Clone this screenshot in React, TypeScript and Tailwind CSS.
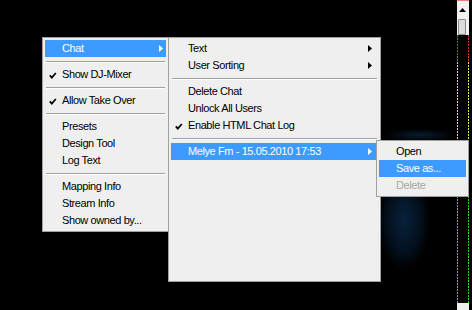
import React from "react";

type Item =
  | { sep: true }
  | {
      sep?: false;
      label: string;
      checked?: boolean;
      sub?: boolean;
      active?: boolean;
      disabled?: boolean;
    };

const Check = ({ color }: { color: string }) => (
  <svg
    width="8"
    height="7"
    viewBox="0 0 8 7"
    className="absolute left-[4px] top-[6px]"
  >
    <path
      d="M0.8 3.4 L2.8 5.6 L6.8 1"
      fill="none"
      stroke={color}
      strokeWidth="1.7"
    />
  </svg>
);

const Arrow = ({ color, right }: { color: string; right: string }) => (
  <svg
    width="4"
    height="7"
    viewBox="0 0 4 7"
    className={`absolute top-[5px] ${right}`}
  >
    <path d="M0 0 L4 3.5 L0 7 Z" fill={color} />
  </svg>
);

const Menu = ({
  items,
  className,
  arrowRight = "right-[3px]",
}: {
  items: Item[];
  className: string;
  arrowRight?: string;
}) => (
  <div
    className={`absolute border border-[#a0a0a0] bg-[#efefef] p-[2px] ${className}`}
  >
    {items.map((it, i) =>
      it.sep ? (
        <div key={i} className="flex h-[9px] flex-col justify-center px-[1px]">
          <div className="h-px bg-[#a0a0a0]" />
          <div className="h-px bg-white" />
        </div>
      ) : (
        <div
          key={i}
          className={`relative flex h-[17px] items-center whitespace-nowrap pl-[17px] ${
            it.active
              ? "bg-[#3d9bff] text-white"
              : it.disabled
                ? "text-[#a7a7a7]"
                : "text-black"
          }`}
        >
          {it.checked && <Check color={it.active ? "#fff" : "#000"} />}
          <span className="leading-none">{it.label}</span>
          {it.sub && (
            <Arrow color={it.active ? "#fff" : "#000"} right={arrowRight} />
          )}
        </div>
      )
    )}
  </div>
);

const mainItems: Item[] = [
  { label: "Chat", sub: true, active: true },
  { sep: true },
  { label: "Show DJ-Mixer", checked: true },
  { sep: true },
  { label: "Allow Take Over", checked: true },
  { sep: true },
  { label: "Presets" },
  { label: "Design Tool" },
  { label: "Log Text" },
  { sep: true },
  { label: "Mapping Info" },
  { label: "Stream Info" },
  { label: "Show owned by..." },
];

const chatItems: Item[] = [
  { label: "Text", sub: true },
  { label: "User Sorting", sub: true },
  { sep: true },
  { label: "Delete Chat" },
  { label: "Unlock All Users" },
  { label: "Enable HTML Chat Log", checked: true },
  { sep: true },
  { label: "Melye Fm - 15.05.2010 17:53", sub: true, active: true },
];

const logItems: Item[] = [
  { label: "Open" },
  { label: "Save as...", active: true },
  { label: "Delete", disabled: true },
];

const App = () => {
  return (
    <div className="relative flex h-[310px] w-[472px] overflow-hidden bg-black font-['Liberation_Sans',sans-serif] text-[11px] tracking-[-0.4px]">
      {/* stage */}
      <div className="h-full flex-1 bg-[radial-gradient(ellipse_26px_50px_at_404px_220px,#08223c,#041120_60%,transparent),radial-gradient(ellipse_36px_6px_at_420px_135px,#081c32,transparent)]" />

      {/* right strip */}
      <div className="flex h-full w-[12px] flex-col">
        <div className="relative h-[35px] border-t border-[#e88080] bg-[#f2f2f2]">
          <svg
            width="7"
            height="4"
            viewBox="0 0 7 4"
            className="absolute left-[2px] top-[7px]"
          >
            <path d="M0 4 L3.5 0 L7 4 Z" fill="#000" />
          </svg>
          <div className="absolute left-[1px] top-[18px] h-[16px] w-[8px] rounded-[1px] border border-[#8a8a8a] bg-[#dcdcdc]" />
        </div>
        <svg width="12" height="268" className="block">
          <line x1="0.5" y1="0" x2="0.5" y2="27" stroke="#e03030" strokeDasharray="2 1" />
          <line x1="11.5" y1="0" x2="11.5" y2="27" stroke="#e03030" strokeDasharray="2 1" />
          <line x1="0.5" y1="27" x2="0.5" y2="155" stroke="#f0e040" strokeDasharray="2 1" />
          <line x1="11.5" y1="27" x2="11.5" y2="155" stroke="#f0e040" strokeDasharray="2 1" />
          <line x1="0.5" y1="155" x2="0.5" y2="268" stroke="#30e030" strokeDasharray="2 1" />
          <line x1="11.5" y1="155" x2="11.5" y2="268" stroke="#30e030" strokeDasharray="2 1" />
        </svg>
        <div className="flex-1 bg-[#efefef]" />
      </div>
      <div className="h-full w-[3px]" />

      {/* context menus */}
      <Menu
        items={mainItems}
        className="left-[42px] top-[37px] w-[127px]"
        arrowRight="right-[3px]"
      />
      <Menu
        items={chatItems}
        className="left-[168px] top-[37px] h-[245px] w-[213px]"
        arrowRight="right-[6px]"
      />
      <Menu items={logItems} className="left-[376px] top-[140px] w-[93px]" />
    </div>
  );
};

export default App;
